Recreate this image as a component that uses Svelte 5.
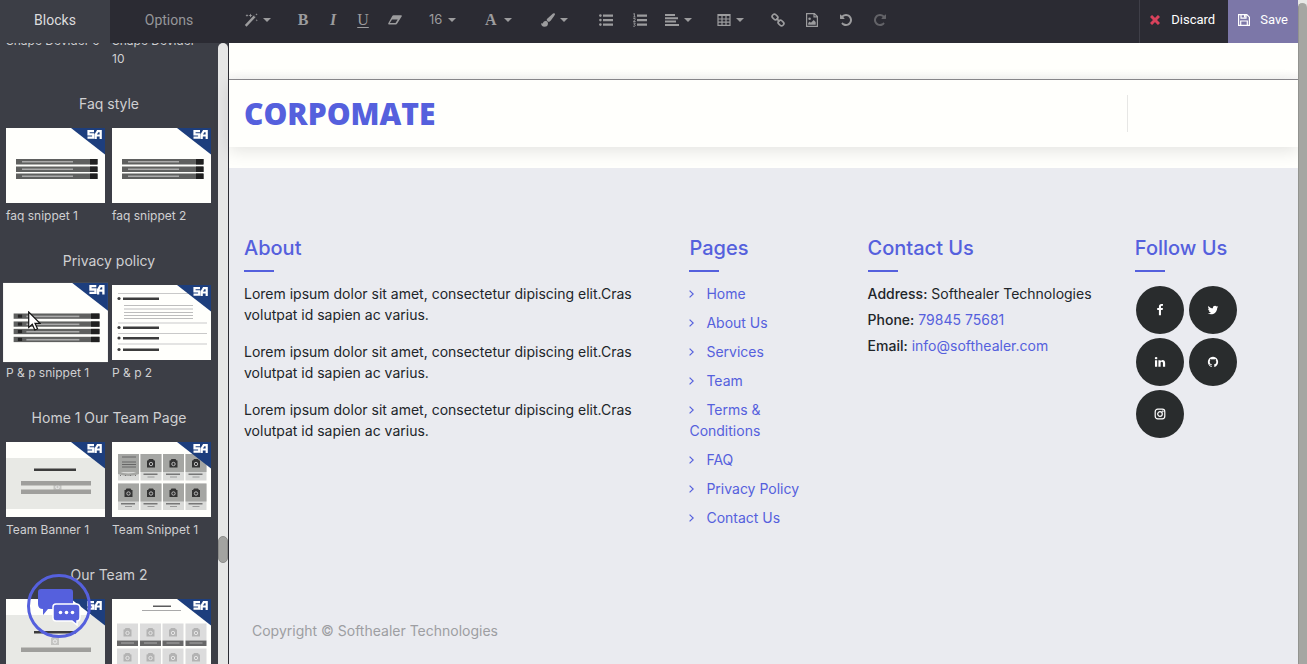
<script>
  const sections = [
    { title: 'Faq style', items: [{ name: 'faq snippet 1', kind: 'faq' }, { name: 'faq snippet 2', kind: 'faq' }] },
    { title: 'Privacy policy', items: [{ name: 'P & p snippet 1', kind: 'policy', hovered: true }, { name: 'P & p 2', kind: 'text' }] },
    { title: 'Home 1 Our Team Page', items: [{ name: 'Team Banner 1', kind: 'banner' }, { name: 'Team Snippet 1', kind: 'team' }] },
    { title: 'Our Team 2', items: [{ kind: 'banner2' }, { kind: 'team2' }] }
  ];
  const pages = [['Home'], ['About Us'], ['Services'], ['Team'], ['Terms &', 'Conditions'], ['FAQ'], ['Privacy Policy'], ['Contact Us']];
  const lorem = 'Lorem ipsum dolor sit amet, consectetur dipiscing elit.Cras volutpat id sapien ac varius.';
  const social = [
    { name: 'Facebook', d: 'M1343 12v264h-157q-86 0-116 36t-30 108v189h293l-39 296h-254v759h-306v-759h-255v-296h255v-218q0-186 104-288.5t277-102.5q147 0 228 12z' },
    { name: 'Twitter', d: 'M1684 408q-67 98-162 167 1 14 1 42 0 130-38 259.5t-115.5 248.5-184.5 210.5-258 146-323 54.5q-271 0-496-145 35 4 78 4 225 0 401-138-105-2-188-64.5t-114-159.5q33 5 61 5 43 0 85-11-112-23-185.5-111.5t-73.5-205.5v-4q68 38 146 41-66-44-105-115t-39-154q0-88 44-163 121 149 294.5 238.5t371.5 99.5q-8-38-8-74 0-134 94.5-228.5t228.5-94.5q140 0 236 102 109-21 205-78-37 115-142 178 93-10 186-50z' },
    { name: 'LinkedIn', d: 'M477 625v991h-330v-991h330zm21-306q1 73-50.5 122t-135.5 49h-2q-82 0-132-49t-50-122q0-74 51.5-122.5t134.5-48.5 133 48.5 51 122.5zm1166 729v568h-329v-530q0-105-40.5-164.5t-126.5-59.5q-63 0-105.5 34.5t-63.5 85.5q-11 30-11 81v553h-329q2-399 2-647t-1-296l-1-48h329v144h-2q20-32 41-56t56.5-52 87-43.5 114.5-15.5q171 0 275 113.5t104 332.5z' },
    { name: 'GitHub', d: 'M896 128q209 0 385.500 103t279.500 279.500 103 385.500q0 251-146.500 451.500t-378.500 277.500q-27 5-40-7t-13-30q0-3 .5-76.500t.5-134.500q0-97-52-142 57-6 102.500-18t94-39 81-66.500 53-105 20.500-150.500q0-119-79-206 37-91-8-204-28-9-81 11t-92 44l-38 24q-93-26-192-26t-192 26q-16-11-42.500-27t-83.500-38.500-85-13.500q-45 113-8 204-79 87-79 206 0 85 20.500 150t52.500 105 80.500 67 94 39 102.500 18q-39 36-49 103-21 10-45 15t-57 5-65.500-21.500-55.500-62.500q-19-32-48.500-52t-49.500-24l-20-3q-21 0-29 4.500t-5 11.500 9 14 13 12l7 5q22 10 43.500 38t31.500 51l10 23q13 38 44 61.500t67 30 69.500 7 55.500-3.500l23-4q0 38 .5 88.500t.5 54.500q0 18-13 30t-40 7q-232-77-378.500-277.500t-146.500-451.500q0-209 103-385.500t279.500-279.500 385.500-103z' },
    { name: 'Instagram', d: '' }
  ];
  const undoPath = 'M1664 896q0 156-61 298t-164 245-245 164-298 61q-172 0-327-72.5t-264-204.5q-7-10-6.5-22.5t8.500-20.5l137-138q10-9 25-9 16 2 23 12 73 95 179 147t225 52q104 0 198.500-40.500t163.500-109.500 109.500-163.500 40.500-198.500-40.500-198.500-109.500-163.500-163.500-109.500-198.500-40.500q-98 0-188 35.500t-160 101.500l137 138q31 30 14 69-17 40-59 40h-448q-26 0-45-19t-19-45v-448q0-42 40-59 39-17 69 14l130 129q107-101 244.500-156.500t284.500-55.500q156 0 298 61t245 164 164 245 61 298z';
</script>

{#snippet caret()}
  <svg class="caret" viewBox="0 0 8 4" aria-hidden="true"><path d="M0 0h8L4 4z" /></svg>
{/snippet}

{#snippet camera(x, y, c, hole)}
  <path d="M{x - 4} {y - 3}h1l1-1.500h4l1 1.500h1v7h-8z" fill={c} />
  <circle cx={x} cy={y + 0.5} r="1.700" fill="none" stroke={hole} stroke-width="1" />
{/snippet}

{#snippet thumb(kind)}
  <svg class="thumb" viewBox="0 0 99 75" aria-hidden="true">
    <rect width="99" height="75" fill="#fffffc" />
    {#if kind === 'faq'}
      {#each [31, 38.5, 45.500] as y}
        <rect x="10" {y} width="82" height="5.500" fill="#5f605f" />
        <rect x="16" y={y + 2} width="51" height="1.500" fill="#aaa" />
        <rect x="84" {y} width="7" height="5.500" fill="#202020" />
      {/each}
    {:else if kind === 'policy'}
      {#each [29, 36.500, 43.500, 51] as y}
        <rect x="10" {y} width="81" height="5" fill="#5f605f" />
        <rect x="14" y={y + 1} width="4" height="3" fill="#252525" />
        <rect x="22" y={y + 2} width="50" height="1.500" fill="#aaa" />
        <rect x="83" {y} width="8" height="5" fill="#202020" />
      {/each}
    {:else if kind === 'text'}
      {#each [8, 37.500, 48, 58.500] as y}<rect x="6" {y} width="89" height="1" fill="#c9c9c9" />{/each}
      {#each [12.500, 41.500, 52, 63.500] as y}
        <circle cx="7" cy={y + 1} r="1.600" fill="#3c3c3c" />
        <rect x="11" {y} width="36" height="2.500" fill="#3c3c3c" />
      {/each}
      {#each [20, 23.500, 27, 30, 33] as y}<rect x="12" {y} width="69" height="1" fill="#bdbdbd" />{/each}
    {:else if kind === 'banner' || kind === 'banner2'}
      <rect y="16" width="99" height={kind === 'banner' ? 51 : 59} fill="#e8e9e5" />
      <rect x="28" y={kind === 'banner' ? 26.500 : 32} width="42" height="2.500" fill="#3c3c3c" />
      {@render camera(kind === 'banner' ? 51.500 : 49, kind === 'banner' ? 44.500 : 42, '#c4c5c2', '#eee')}
      {#if kind === 'banner'}
        <rect x="15" y="39" width="70" height="4.500" fill="#9f9f9c" />
        <rect x="15" y="47.500" width="70" height="4.500" fill="#9f9f9c" />
      {:else}
        <rect x="15" y="48.500" width="70" height="4.500" fill="#9f9f9c" />
      {/if}
    {:else if kind === 'team'}
      {#each [12, 41.500] as y, r}
        {#each [6, 28.500, 51, 73.500] as x, c}
          <rect {x} {y} width="21" height="26.500" fill="#d9dad8" />
          <rect {x} {y} width="21" height="18" fill="#a5a6a3" />
          {#if r === 0 && c === 0}
            <path d="M6 29q10 5 21 0v3q-10 4-21 0z" fill="#a5a6a3" />
            <path d="M10 15h14M10 20h14M10 22.500h14M10 25h14" stroke="#666" stroke-width="1" />
            <path d="M8 33.500h18" stroke="#777" stroke-width="1" stroke-dasharray="1 4" />
          {:else}
            {@render camera(x + 10.500, y + 9.500, '#333', '#bbb')}
            <rect x={x + 3} y={y + 19.500} width="14" height="1.500" fill="#777" />
            <rect x={x + 7} y={y + 22.500} width="7" height="1" fill="#999" />
          {/if}
        {/each}
      {/each}
    {:else if kind === 'team2'}
      <rect x="41" y="6.500" width="18" height="1.500" fill="#5c5c5c" />
      <rect x="30" y="11" width="39" height="1" fill="#a9a9a9" />
      {#each [24.500, 49.500] as y}
        {#each [5, 28, 50.500, 73.500] as x}
          <rect {x} {y} width="21" height="17" fill="#dcdcdc" />
          {@render camera(x + 10.500, y + 9, '#b3b3b3', '#e5e5e5')}
          <rect {x} y={y + 17} width="21" height="5.500" fill="#686868" />
          <rect x={x + 4} y={y + 19} width="13" height="1" fill="#aaa" />
        {/each}
      {/each}
    {/if}
    <path d="M65 0h34v26.500z" fill="#1d3e7d" />
    <path d="M88 3.200h-5.500v3.200h4.700v3.200h-5.700M89.700 11V6.500l2-3.300h3V11M90 7.500h4.700" fill="none" stroke="#fff" stroke-width="2.200" />
  </svg>
{/snippet}

<div class="app">
  <aside class="sidebar">
    <div class="tabs" role="tablist">
      <button class="tab active" role="tab" aria-selected="true">Blocks</button>
      <button class="tab" role="tab" aria-selected="false">Options</button>
    </div>
    <div class="panel">
      <div class="blocks">
        <div class="pair first">
          <span class="label">Shape Devider 9</span>
          <span class="label">Shape Devider<br />10</span>
        </div>
        {#each sections as s}
          <section>
            <h2>{s.title}</h2>
            <div class="pair">
              {#each s.items as item}
                <div class="block" class:hovered={item.hovered}>
                  {@render thumb(item.kind)}
                  {#if item.name}<span class="label">{item.name}</span>{/if}
                </div>
              {/each}
            </div>
          </section>
        {/each}
      </div>
      <div class="track"><div class="grip"></div></div>
    </div>
  </aside>

  <div class="main">
    <div class="toolbar">
      <div class="tools">
        <div class="group">
          <button class="drop" aria-label="Style">
            <svg class="ic" viewBox="0 0 14 14"><path d="M1.700 12.800L10.800 3.200" stroke="currentColor" stroke-width="2.400" /><path d="M9.500 2.200l2 2" stroke="#2b2b33" stroke-width=".6" /><path d="M3 1l.4 1.100 1.100.4-1.100.4L3 4l-.4-1.100-1.100-.4 1.100-.4zM6.500.5l.6 1.400 1.400.6-1.400.6-.6 1.400-.6-1.400-1.400-.6 1.400-.6zM12.800 6l.3 1 .9.300-.9.300-.3 1-.3-1-.9-.3.9-.3zM12.500.2l.3.900.9.300-.9.300-.3.900-.3-.9-.9-.3.9-.3z" /></svg>
            {@render caret()}
          </button>
        </div>
        <div class="group">
          <button class="letter b">B</button>
          <button class="letter i">I</button>
          <button class="letter u">U</button>
          <button class="icon" aria-label="Remove format">
            <svg class="ic" viewBox="0 0 14 14"><path fill-rule="evenodd" d="M5.500 2.200h7.600q1 0 .7 1L9.200 10.500q-.5.900-1.500.900H1q-1.200 0-.7-1.100L4.300 3q.4-.8 1.200-.8zM7.500 10l2.200-3.500H4L1.800 10z" /></svg>
          </button>
        </div>
        <div class="group">
          <button class="drop size">16 {@render caret()}</button>
        </div>
        <div class="group spaced">
          <button class="drop letter b" aria-label="Font colour">A {@render caret()}</button>
        </div>
        <div class="group spaced">
          <button class="drop" aria-label="Background colour">
            <svg class="ic" viewBox="0 0 14 14"><path d="M13.500.3q.8.700.2 1.700Q10.500 7 9 8.300q-1 .8-1.800.4L5.900 7.400q-.5-.8.3-1.700L12 .5q.8-.6 1.500-.2zM5 7.700q2 .6 2 2.500 0 3.500-3.600 3.500Q.2 13.700 0 10q1.200.9 1.700.3.800-2.500 3.300-2.600z" /></svg>
            {@render caret()}
          </button>
        </div>
        <div class="group spaced">
          <button class="icon" aria-label="Bulleted list">
            <svg class="ic" viewBox="0 0 14 14"><path d="M4 1.500h10v2.300H4zM4 6h10v2.300H4zM4 10.500h10v2.300H4z" /><circle cx="1.400" cy="2.600" r="1.300" /><circle cx="1.400" cy="7.100" r="1.300" /><circle cx="1.400" cy="11.600" r="1.300" /></svg>
          </button>
          <button class="icon" aria-label="Numbered list">
            <svg class="ic" viewBox="0 0 14 14"><path d="M4 1.500h10v2.300H4zM4 6h10v2.300H4zM4 10.500h10v2.300H4z" /><path d="M.3 1L1.400.5V4M.3 4h2.200M.3 5.500h1.800v1L.4 8.500h2.200M.3 10h2L1.200 11.500q1.200 0 1 1.200-.4 1-2 .5" fill="none" stroke="currentColor" stroke-width=".9" /></svg>
          </button>
          <button class="drop" aria-label="Align">
            <svg class="ic" viewBox="0 0 14 14"><path d="M0 1h10v2H0zM0 4.300h13v2H0zM0 7.600h11v2H0zM0 10.900h14v2H0z" /></svg>
            {@render caret()}
          </button>
        </div>
        <div class="group">
          <button class="drop" aria-label="Table">
            <svg class="ic" viewBox="0 0 14 14"><path d="M1 1.700h12v10.600H1zM1 2.500h12M1 6h12M1 9.200h12M5 2v10M9 2v10" fill="none" stroke="currentColor" stroke-width="1.200" /></svg>
            {@render caret()}
          </button>
        </div>
        <div class="group">
          <button class="icon" aria-label="Link">
            <svg class="ic" viewBox="0 0 14 14"><g fill="none" stroke="currentColor" stroke-width="1.700"><rect x="-3" y="-2.200" width="6" height="4.400" rx="2" transform="translate(4 4) rotate(45)" /><rect x="-3" y="-2.200" width="6" height="4.400" rx="2" transform="translate(10 10) rotate(45)" /><path d="M5.300 5.300l3.400 3.400" /></g></svg>
          </button>
          <button class="icon" aria-label="Image">
            <svg class="ic" viewBox="0 0 14 14"><path d="M1.600.6h7.800l3 3v9.800H1.600zM9 .6v3.300h3.300" fill="none" stroke="currentColor" stroke-width="1.200" /><circle cx="4.600" cy="5.700" r="1.300" /><path d="M3.200 11.700V10l1.500-1.500 1.200 1.200L8.700 7l2 2v2.700z" /></svg>
          </button>
          <button class="icon" aria-label="Undo"><svg class="ic" viewBox="0 0 1792 1792"><path d={undoPath} /></svg></button>
          <button class="icon faded" aria-label="Redo"><svg class="ic flip" viewBox="0 0 1792 1792"><path d={undoPath} /></svg></button>
        </div>
      </div>
      <button class="action discard">
        <svg viewBox="0 0 10 10" aria-hidden="true"><path d="M1 1l8 8M9 1L1 9" stroke="#d8425c" stroke-width="3" /></svg>
        Discard
      </button>
      <button class="action save">
        <svg viewBox="0 0 12 12" aria-hidden="true"><path d="M.6.6h8.200l2.600 2.600v8.200H.6zM3 .6v3.600h5V.6M2.700 11.400V7h6.600v4.400" fill="none" stroke="#fff" stroke-width="1.200" /><path d="M6 1h1.500v2.500H6z" fill="#fff" /></svg>
        Save
      </button>
    </div>

    <div class="topline"></div>
    <header><a class="brand" href="#home">CORPOMATE</a><span class="rule"></span></header>

    <footer>
      <div class="cols">
        <div class="col">
          <h3>About</h3>
          {#each [1, 2, 3] as n (n)}<p>{lorem}</p>{/each}
        </div>
        <div class="col">
          <h3>Pages</h3>
          <ul>
            {#each pages as [first, second]}
              <li><a href="#page"><svg class="chev" viewBox="0 0 5 8" aria-hidden="true"><path d="M.6.600L4.200 4 .6 7.400" fill="none" stroke="currentColor" stroke-width="1.200" /></svg>{first}{#if second}<br />{second}{/if}</a></li>
            {/each}
          </ul>
        </div>
        <div class="col contact">
          <h3>Contact Us</h3>
          <div><b>Address:</b> Softhealer Technologies</div>
          <div><b>Phone:</b> <a href="#phone">79845 75681</a></div>
          <div><b>Email:</b> <a href="#email">info@softhealer.com</a></div>
        </div>
        <div class="col">
          <h3>Follow Us</h3>
          <div class="social">
            {#each social as s}
              <a href="#social" aria-label={s.name}>
                {#if s.d}
                  <svg viewBox="0 0 1792 1792"><path d={s.d} /></svg>
                {:else}
                  <svg viewBox="0 0 12 12" fill="none" stroke="#fff" stroke-width="1.200"><rect x="1.200" y="1.200" width="9.600" height="9.600" rx="2.500" /><circle cx="6" cy="6" r="2.300" /><circle cx="8.700" cy="3.300" r=".3" /></svg>
                {/if}
              </a>
            {/each}
          </div>
        </div>
      </div>
      <p class="copy">Copyright © Softhealer Technologies</p>
    </footer>
  </div>
  <div class="pagebar"><div></div></div>

  <button class="chat" aria-label="Open chat">
    <svg viewBox="0 0 64 64">
      <circle cx="32" cy="32" r="30.500" fill="none" stroke="#5560dd" stroke-width="3" />
      <path d="M14 15h29q3 0 3 3v11q0 6-6 6H21l-5 6v-6q-5 0-5-5V18q0-3 3-3z" fill="#5560dd" />
      <path d="M29 30h20q4 0 4 4v9q0 4-3 4v4l-5-4H29q-3 0-3-3V33q0-3 3-3z" fill="#5560dd" stroke="#fff" stroke-width="1.500" />
      <circle cx="33.500" cy="38.500" r="1.800" fill="#fff" /><circle cx="39.500" cy="38.500" r="1.800" fill="#fff" /><circle cx="45.500" cy="38.500" r="1.800" fill="#fff" />
    </svg>
  </button>
  <svg class="pointer" viewBox="0 0 13 20" aria-hidden="true"><path d="M.7 1v15.500l3.600-3.200 2.500 5.700 2.700-1.200L7 12.300h5z" fill="#fff" stroke="#111" stroke-width="1.200" /></svg>
</div>

<style>
  :global(body) { background: #fffffc; font: 14px/21px Inter, sans-serif; color: #212529; }
  .app { position: relative; display: flex; height: 100vh; overflow: hidden; }
  button { border: 0; margin: 0; padding: 0; background: none; color: inherit; font: inherit; cursor: pointer; }
  a { color: #5560dd; text-decoration: none; }
  svg { display: block; flex: none; }

  .sidebar { width: 228px; flex: none; display: flex; flex-direction: column; background: #3c3e46; border-right: 1px solid #2b2b33; }
  .tabs { display: flex; height: 43px; flex: none; }
  .tab { flex: 1 1 118px; background: #2b2b33; color: #96969a; font: 14px/40px Roboto, sans-serif; padding-bottom: 3px; }
  .tab.active { flex: 0 0 110px; background: #3c3e46; color: #dcdcde; }
  .panel { flex: 1; min-height: 0; display: flex; overflow: hidden; }
  .blocks { flex: 1; margin-top: -11px; color: #d0d0d2; overflow: hidden; }
  .pair { display: grid; grid-template-columns: 99px 99px; column-gap: 7px; padding-left: 6px; }
  .first { height: 36px; }
  section { padding-top: 26px; }
  h2 { margin: 0 0 14px; font-size: 14px; line-height: 20px; font-weight: 400; text-align: center; }
  .label { display: block; font-size: 12px; line-height: 18px; }
  .thumb { width: 99px; height: 75px; margin-bottom: 4px; }
  .hovered .thumb { transform: scale(1.06); }
  .track { width: 10px; flex: none; background: #e6e6e6; border-radius: 5px 5px 0 0; display: flex; flex-direction: column; }
  .grip { height: 27px; margin-top: 493px; border-radius: 5px; background: #a3a3a1; border: 1px solid #8c8c8a; box-sizing: border-box; }

  .main { flex: 1; min-width: 0; display: flex; flex-direction: column; }
  .toolbar { display: flex; height: 43px; flex: none; background: #2b2b33; color: #9c9c9e; }
  .tools { flex: 1; display: flex; align-items: center; padding: 0 0 4px 7px; gap: 9px; }
  .group { display: flex; }
  .spaced { margin-left: 4px; }
  .group button { height: 30px; display: flex; align-items: center; justify-content: center; }
  .group .drop { width: 43px; padding: 0 8px; box-sizing: border-box; justify-content: space-between; }
  .group .icon { width: 34px; }
  .group .letter { width: 30px; font-family: "Liberation Serif", serif; font-size: 16px; }
  .group .letter.drop { width: 43px; }
  .group .size { font-size: 13px; }
  .b { font-weight: 700; }
  .i { font-weight: 700; font-style: italic; }
  .u { text-decoration: underline; text-underline-offset: 2px; }
  .ic { width: 14px; height: 14px; fill: currentColor; }
  .flip { transform: scaleX(-1); }
  .faded { opacity: .5; }
  .caret { width: 8px; height: 4px; fill: currentColor; }
  .action { display: flex; align-items: center; gap: 10px; padding: 0 10px 3px; color: #fff; font: 13px/20px Roboto, sans-serif; }
  .action svg { width: 12px; height: 12px; }
  .discard { border-left: 1px solid #3f3f48; padding-right: 13px; }
  .discard svg { width: 10px; height: 10px; margin-right: 1px; }
  .save { background: #7c77a8; }

  .topline { height: 36px; flex: none; border-bottom: 1px solid #8b8a8e; background: linear-gradient(#fffffc 75%, #f7f7f6); }
  header { height: 67px; flex: none; display: flex; align-items: center; justify-content: space-between; padding: 0 170px 0 15px; box-shadow: 0 4px 16px #0000001c; margin-bottom: 21px; }
  .brand { font: 800 30px/36px "Open Sans", sans-serif; }
  .rule { width: 1px; height: 37px; background: #e7e7e5; }

  footer { position: relative; flex: 1; background: #eaebf0; padding-top: 68px; }
  .cols { display: grid; grid-template-columns: 5fr 2fr 3fr 2fr; min-height: 384px; }
  .col { padding: 0 15px; min-width: 0; }
  h3 { margin: 0 0 11px; font-size: 20px; line-height: 24px; font-weight: 500; color: #5560dd; white-space: nowrap; }
  h3::after { content: ""; display: block; width: 30px; height: 2px; margin-top: 10px; background: #5560dd; }
  p { margin: 0 0 16px; }
  ul { list-style: none; margin: 0; padding: 0; }
  li { margin-bottom: 8px; }
  .chev { display: inline-block; width: 5px; height: 8px; margin: 0 12px 1px 0; }
  .contact div { margin-bottom: 5px; white-space: nowrap; }
  .contact b { font-weight: 500; }
  .social { display: flex; flex-wrap: wrap; gap: 4px 5px; padding: 3px 0 0 1px; }
  .social a { width: 48px; height: 48px; border-radius: 50%; background: #292c2d; display: flex; align-items: center; justify-content: center; }
  .social svg { width: 12px; height: 12px; }
  .social path { fill: #fff; }
  .copy { margin: 0 0 0 23px; color: #9d9ea2; }

  .pagebar { width: 9px; flex: none; background: #e8e8e6; padding-top: 3px; display: flex; }
  .pagebar div { flex: 1; background: #a5a6a2; border-radius: 5px 5px 0 0; border-left: 1px solid #92938f; }

  .chat { position: absolute; left: 27px; bottom: 26px; width: 64px; height: 64px; }
  .pointer { position: absolute; left: 28px; top: 311px; width: 13px; height: 20px; }
</style>
